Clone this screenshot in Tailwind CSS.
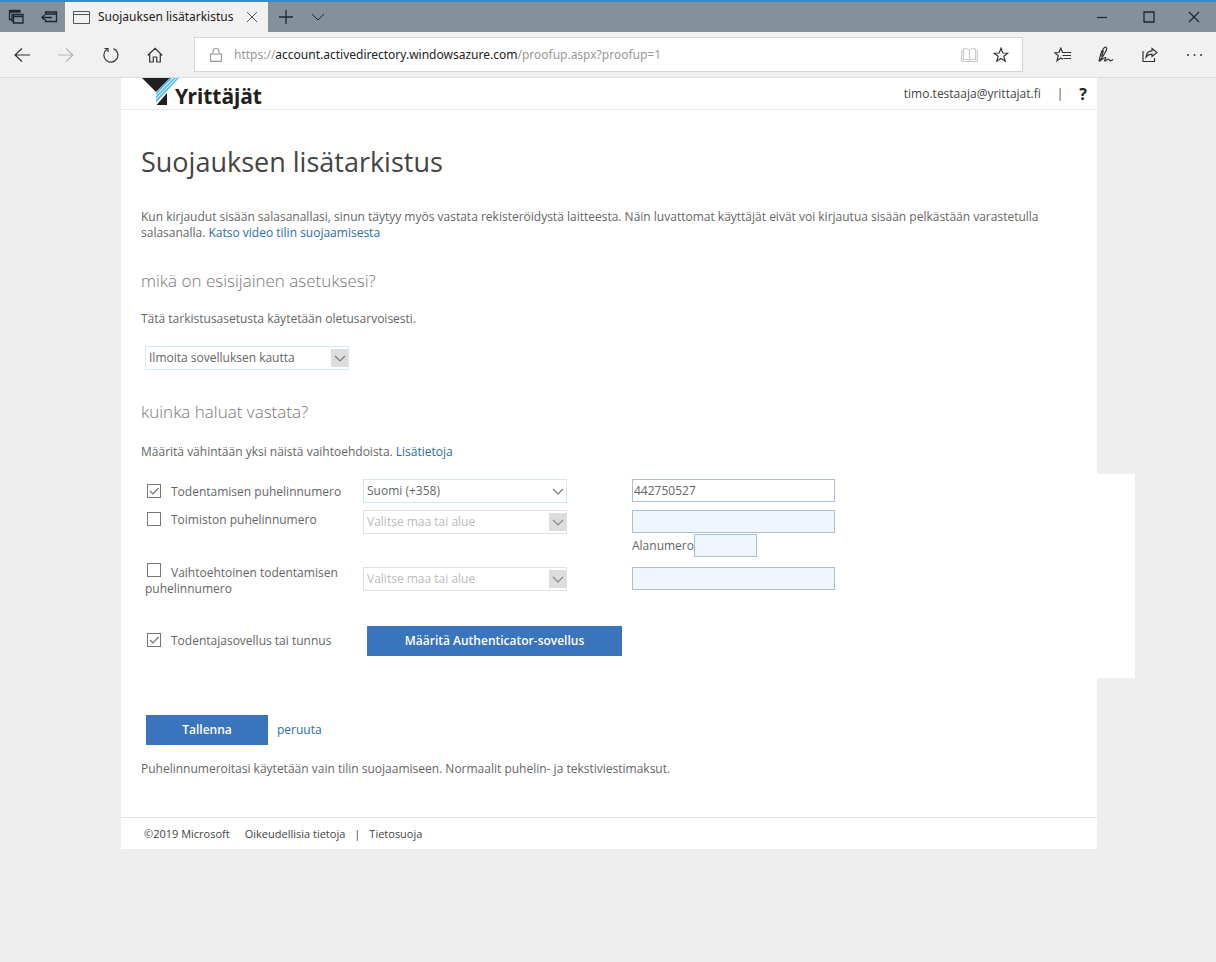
<!DOCTYPE html>
<html lang="fi">
<head>
    <meta charset="UTF-8">
    <meta name="viewport" content="width=device-width, initial-scale=1.0">
    <title>Suojauksen lisätarkistus</title>
    <script src="https://cdn.jsdelivr.net/npm/@tailwindcss/browser@4"></script>
</head>
<body class="min-h-screen bg-[#eeeeee] font-['Open_Sans',sans-serif] text-[12px] leading-4 text-[#666666]">
    <!-- Tab bar -->
    <header class="font-['Noto_Sans',sans-serif]">
        <div class="flex h-8 items-stretch border-t-2 border-[#3c8ac4] bg-[#84909c] text-[#1c2733]">
            <button aria-label="Välilehdet" class="flex w-8 items-center justify-center">
                <svg class="size-4" viewBox="0 0 16 16" fill="none" stroke="currentColor" stroke-width="1.3"><path d="M3.500 10.500H1.500V1.500h10.500v2M1.500 3h10.500M6 12H4V4.500M5.500 5.500h9.500v8.500H5.500zM5.500 7.500h9.500" /></svg>
            </button>
            <button aria-label="Siirrä välilehdet sivuun" class="flex w-[33px] items-center justify-center">
                <svg class="h-4 w-[18px]" viewBox="0 0 18 16" fill="none" stroke="currentColor" stroke-width="1.3"><path d="M5.500 6V3h11v9.500h-11v-2M5.500 5h11M12 8.500H2M4.500 6L2 8.500 4.500 11" /></svg>
            </button>
            <div class="flex w-[203px] items-center bg-[#f1f1f1] pl-2 text-[#222222]">
                <svg class="h-[15px] w-[17px]" viewBox="0 0 17 15" fill="none" stroke="#555" stroke-width="1"><path d="M.5 1.500h16v12H.5zM.5 4.500h16" /></svg>
                <span class="ml-2 whitespace-nowrap">Suojauksen lisätarkistus</span>
                <button aria-label="Sulje välilehti" class="mr-[10px] ml-auto">
                    <svg class="size-3" viewBox="0 0 12 12" fill="none" stroke="#555"><path d="M1 1l10 10M11 1L1 11" /></svg>
                </button>
            </div>
            <button aria-label="Uusi välilehti" class="flex w-9 items-center justify-center">
                <svg class="size-[14px]" viewBox="0 0 14 14" fill="none" stroke="currentColor" stroke-width="1.3"><path d="M7 0v14M0 7h14" /></svg>
            </button>
            <button aria-label="Esikatselut" class="flex w-7 items-center justify-center">
                <svg class="h-2 w-[14px]" viewBox="0 0 14 8" fill="none" stroke="currentColor"><path d="M1 1l6 6 6-6" /></svg>
            </button>
            <div class="ml-auto flex">
                <button aria-label="Pienennä" class="flex w-[47px] items-center justify-center">
                    <svg class="size-3" viewBox="0 0 12 12" fill="none" stroke="currentColor" stroke-width="1.2"><path d="M1 6.500h10" /></svg>
                </button>
                <button aria-label="Suurenna" class="flex w-[47px] items-center justify-center">
                    <svg class="size-3" viewBox="0 0 12 12" fill="none" stroke="currentColor" stroke-width="1.3"><path d="M1 1h10v10H1z" /></svg>
                </button>
                <button aria-label="Sulje" class="flex w-[44px] items-center justify-center">
                    <svg class="size-3" viewBox="0 0 12 12" fill="none" stroke="currentColor" stroke-width="1.2"><path d="M1 1l10 10M11 1L1 11" /></svg>
                </button>
            </div>
        </div>

        <!-- Toolbar -->
        <div class="flex h-[46px] items-center border-b border-[#dddddd] bg-[#f1f1f1] text-[#333333]">
            <button aria-label="Takaisin" class="flex w-11 justify-center">
                <svg class="size-4" viewBox="0 0 16 16" fill="none" stroke="currentColor" stroke-width="1.2"><path d="M16 8H1M8 1.500L1 8l7 6.500" /></svg>
            </button>
            <button aria-label="Eteenpäin" class="flex w-11 justify-center text-[#b5b5b5]">
                <svg class="size-4" viewBox="0 0 16 16" fill="none" stroke="currentColor" stroke-width="1.2"><path d="M0 8h15M8 1.500L15 8l-7 6.500" /></svg>
            </button>
            <button aria-label="Päivitä" class="flex w-[45px] justify-center">
                <svg class="size-4" viewBox="0 0 16 16" fill="none" stroke="currentColor" stroke-width="1.2"><path d="M10.500 1.600A7 7 0 1 1 4 2.300M1.500 1.500h3.500V5" /></svg>
            </button>
            <button aria-label="Aloitussivu" class="flex w-11 justify-center">
                <svg class="size-4" viewBox="0 0 16 16" fill="none" stroke="currentColor" stroke-width="1.2"><path d="M.7 8.500L8 1.300l7.300 7.200M2.700 7v8h3.600v-5h3.400v5h3.600V7" /></svg>
            </button>
            <div class="ml-[17px] flex h-[35px] flex-1 items-center border border-[#d4d4d4] bg-white">
                <svg class="ml-[15px] h-4 w-3" viewBox="0 0 12 16" fill="none" stroke="#999" stroke-width="1.1"><path d="M.6 7h10.800v7.400H.6zM3 7V4.500a3 3 0 0 1 6 0V7" /></svg>
                <div role="textbox" aria-label="Osoite" contenteditable="true" class="ml-3 flex-1 whitespace-nowrap text-[#999999] outline-none">https://<span class="text-[#222222]">account.activedirectory.windowsazure.com</span>/proofup.aspx?proofup=1</div>
                <button aria-label="Lukunäkymä" class="flex w-8 justify-center">
                    <svg class="h-4 w-[17px]" viewBox="0 0 17 16" fill="none" stroke="#c8c8c8" stroke-width="1.1"><path d="M8.500 3v10.500M8.500 3C7.500 1.500 4 1.500 2.500 2v10.500c2-.4 5-.3 6 1 1-1.300 4-1.400 6-1V2c-1.500-.5-5-.5-6 1M2.500 4H.7v10.500h15.600V4h-1.800" /></svg>
                </button>
                <button aria-label="Lisää suosikkeihin" class="mr-[5px] flex w-8 justify-center">
                    <svg class="size-4" viewBox="0 0 16 16" fill="none" stroke="currentColor" stroke-width="1.200"><path d="M8 1.200l1.800 4.800 5 .2-4 3.100 1.400 4.900L8 11.400l-4.200 2.800 1.400-4.900-4-3.100 5-.2z" /></svg>
                </button>
            </div>
            <button aria-label="Suosikit" class="ml-[17px] flex w-11 justify-center">
                <svg class="h-4 w-[17px]" viewBox="0 0 17 16" fill="none" stroke="currentColor" stroke-width="1.200"><path d="M10.500 5.500H8.600L6.800 1.200 5 5.500.8 5.800l3.400 2.800-1.200 5 3.800-2.700 2 1.400M9.500 5.500H17M8.500 8.500H17M9.500 11.500H17" /></svg>
            </button>
            <button aria-label="Muistiinpanot" class="flex w-11 justify-center">
                <svg class="h-[17px] w-4" viewBox="0 0 16 17" fill="none" stroke="currentColor" stroke-width="1.200"><path d="M1 15.500l1-4.500C3 7 4.500 3 6.500 1.500c1.500-.8 2.800.3 2 2.200C7.500 6.500 5 10 3 13zM3.500 10.500l2-6M1 15.500C4 13.500 6.500 11 7.500 11.500s-2 3.500-.5 3.500 2-2 3.200-2 .8 1.800 2.200 1.800 1.600-1.300 2.800-1.100" /></svg>
            </button>
            <button aria-label="Jaa" class="flex w-11 justify-center">
                <svg class="size-4" viewBox="0 0 16 16" fill="none" stroke="currentColor" stroke-width="1.200"><path d="M1 4v10.500h11.500V11M10 1.500l5 4-5 4V7.200c-3 0-4.500 1-6 3 .3-4 2.500-6.200 6-6.400z" /></svg>
            </button>
            <button aria-label="Lisää" class="flex w-11 justify-center">
                <svg class="h-4 w-[17px]" viewBox="0 0 17 16" fill="currentColor"><circle cx="2" cy="8" r="1" /><circle cx="8.500" cy="8" r="1" /><circle cx="15" cy="8" r="1" /></svg>
            </button>
        </div>
    </header>

    <!-- Page -->
    <div class="pl-0.5">
    <div class="mx-auto max-w-[976px] bg-white">
        <div class="flex h-8 items-start border-b border-[#eaeaea] pr-[10px] pl-[21px]">
            <svg class="h-[27px] w-[38px]" viewBox="0 0 38 27" role="img" aria-label="Yrittäjät-logo">
                <path d="M0 0h28L14 14z" fill="#231f20" />
                <path d="M25 15v12H14.500z" fill="#231f20" />
                <path d="M14 14.500L28 0h9L14 24.500z" fill="#54bfee" />
                <path d="M13.500 18L31 0M13.500 21.500L34.500 0" stroke="#fff" stroke-width="1" />
            </svg>
            <span class="-ml-[5px] font-['Noto_Sans',sans-serif] text-[21px] leading-9 font-bold text-[#231f20]">Yrittäjät</span>
            <div class="ml-auto flex h-[31px] items-center text-[#444444]">
                <span>timo.testaaja@yrittajat.fi</span>
                <span class="ml-4">|</span>
                <a href="#" class="ml-4 text-[16px] font-bold text-[#222222]">?</a>
            </div>
        </div>

        <main class="px-5 pt-8 pb-10">
            <h1 class="text-[27px] leading-10 text-[#444444]">Suojauksen lisätarkistus</h1>
            <p class="mt-[27px] max-w-[900px]">Kun kirjaudut sisään salasanallasi, sinun täytyy myös vastata rekisteröidystä laitteesta. Näin luvattomat käyttäjät eivät voi kirjautua sisään pelkästään varastetulla salasanalla. <a href="#" class="text-[#2a6da8]">Katso video tilin suojaamisesta</a></p>

            <h2 class="mt-[26px] text-[17px] leading-7 font-light text-[#777777]">mikä on esisijainen asetuksesi?</h2>
            <p class="mt-4">Tätä tarkistusasetusta käytetään oletusarvoisesti.</p>
            <div class="relative mt-[19px] ml-1 w-[204px]">
                <select aria-label="Ensisijainen asetus" class="block h-6 w-full appearance-none border border-[#d3e8f5] bg-white px-[3px]">
                    <option>Ilmoita sovelluksen kautta</option>
                </select>
                <span class="pointer-events-none absolute top-[3px] right-px flex h-[18px] w-[17px] items-center justify-center bg-[#dddddd]">
                    <svg class="h-[7px] w-3" viewBox="0 0 12 7" fill="none" stroke="#777" stroke-width="1.200"><path d="M1 1l5 5 5-5" /></svg>
                </span>
            </div>

            <h2 class="mt-7 text-[17px] leading-7 font-light text-[#777777]">kuinka haluat vastata?</h2>
            <p class="mt-[18px]">Määritä vähintään yksi näistä vaihtoehdoista. <a href="#" class="text-[#2a6da8]">Lisätietoja</a></p>

            <form id="options">
                <div class="mt-[14px] -mr-[58px] grid grid-cols-[222px_269px_1fr] grid-rows-[31px_57px_59px_30px] items-start bg-white pt-[5px] pb-[22px]">
                    <label class="flex items-start gap-[10px] pt-[5px] pl-[6px]">
                        <span class="grid size-[14px]">
                            <input type="checkbox" checked class="peer col-start-1 row-start-1 size-[14px] appearance-none border border-[#777777] bg-white">
                            <svg class="pointer-events-none invisible col-start-1 row-start-1 size-[14px] peer-checked:visible" viewBox="0 0 14 14" fill="none" stroke="#777" stroke-width="1.200"><path d="M3 7l3 3 5.500-6" /></svg>
                        </span>
                        Todentamisen puhelinnumero
                    </label>
                    <div class="relative w-[204px]">
                        <select aria-label="Maa tai alue" class="block h-6 w-full appearance-none border border-[#d3e8f5] bg-white px-[3px]">
                            <option>Suomi (+358)</option>
                        </select>
                        <span class="pointer-events-none absolute top-[3px] right-px flex h-[18px] w-[17px] items-center justify-center">
                            <svg class="h-[7px] w-3" viewBox="0 0 12 7" fill="none" stroke="#777" stroke-width="1.200"><path d="M1 1l5 5 5-5" /></svg>
                        </span>
                    </div>
                    <input type="tel" aria-label="Todentamisen puhelinnumero" value="442750527" class="h-[23px] w-[203px] border border-[#a9bfd2] bg-white px-px">

                    <label class="flex items-start gap-[10px] pt-[2px] pl-[6px]">
                        <span class="grid size-[14px]">
                            <input type="checkbox" class="peer col-start-1 row-start-1 size-[14px] appearance-none border border-[#777777] bg-white">
                            <svg class="pointer-events-none invisible col-start-1 row-start-1 size-[14px] peer-checked:visible" viewBox="0 0 14 14" fill="none" stroke="#777" stroke-width="1.200"><path d="M3 7l3 3 5.500-6" /></svg>
                        </span>
                        Toimiston puhelinnumero
                    </label>
                    <div class="relative w-[204px]">
                        <select aria-label="Toimiston maa tai alue" disabled class="block h-6 w-full appearance-none border border-[#e2e2e2] bg-white px-[3px] text-[#bbbbbb] opacity-100">
                            <option>Valitse maa tai alue</option>
                        </select>
                        <span class="pointer-events-none absolute top-[3px] right-px flex h-[18px] w-[17px] items-center justify-center bg-[#dddddd]">
                            <svg class="h-[7px] w-3" viewBox="0 0 12 7" fill="none" stroke="#888" stroke-width="1.200"><path d="M1 1l5 5 5-5" /></svg>
                        </span>
                    </div>
                    <div>
                        <input type="tel" aria-label="Toimiston puhelinnumero" disabled class="block h-[23px] w-[203px] border border-[#a9bfd2] bg-[#f0f6fd] px-px">
                        <div class="mt-px flex items-center">
                            <label for="extension">Alanumero</label>
                            <input id="extension" type="text" disabled class="h-[23px] w-[63px] border border-[#a9bfd2] bg-[#f0f6fd] px-px">
                        </div>
                    </div>

                    <label class="-mt-1 pl-1">
                        <span class="mr-[10px] ml-[2px] inline-grid size-[14px] align-baseline">
                            <input type="checkbox" class="peer col-start-1 row-start-1 size-[14px] appearance-none border border-[#777777] bg-white">
                            <svg class="pointer-events-none invisible col-start-1 row-start-1 size-[14px] peer-checked:visible" viewBox="0 0 14 14" fill="none" stroke="#777" stroke-width="1.200"><path d="M3 7l3 3 5.500-6" /></svg>
                        </span>Vaihtoehtoinen todentamisen puhelinnumero
                    </label>
                    <div class="relative w-[204px]">
                        <select aria-label="Vaihtoehtoinen maa tai alue" disabled class="block h-6 w-full appearance-none border border-[#e2e2e2] bg-white px-[3px] text-[#bbbbbb] opacity-100">
                            <option>Valitse maa tai alue</option>
                        </select>
                        <span class="pointer-events-none absolute top-[3px] right-px flex h-[18px] w-[17px] items-center justify-center bg-[#dddddd]">
                            <svg class="h-[7px] w-3" viewBox="0 0 12 7" fill="none" stroke="#888" stroke-width="1.200"><path d="M1 1l5 5 5-5" /></svg>
                        </span>
                    </div>
                    <input type="tel" aria-label="Vaihtoehtoinen puhelinnumero" disabled class="h-[23px] w-[203px] border border-[#a9bfd2] bg-[#f0f6fd] px-px">

                    <label class="flex items-start gap-[10px] self-center pl-[6px]">
                        <span class="grid size-[14px]">
                            <input type="checkbox" checked class="peer col-start-1 row-start-1 size-[14px] appearance-none border border-[#777777] bg-white">
                            <svg class="pointer-events-none invisible col-start-1 row-start-1 size-[14px] peer-checked:visible" viewBox="0 0 14 14" fill="none" stroke="#777" stroke-width="1.200"><path d="M3 7l3 3 5.500-6" /></svg>
                        </span>
                        Todentajasovellus tai tunnus
                    </label>
                    <button type="button" class="ml-1 h-[30px] w-[255px] bg-[#3a74bd] font-semibold text-white">Määritä Authenticator-sovellus</button>
                </div>

                <div class="mt-[37px] ml-[5px] flex items-center gap-[9px]">
                    <button type="submit" class="h-[30px] w-[122px] bg-[#3a74bd] font-semibold text-white">Tallenna</button>
                    <a href="#" class="text-[#2a6da8]">peruuta</a>
                </div>
            </form>
            <p class="mt-4">Puhelinnumeroitasi käytetään vain tilin suojaamiseen. Normaalit puhelin- ja tekstiviestimaksut.</p>
        </main>

        <footer class="flex h-8 items-center border-t border-[#e4e4e4] pl-[23px] text-[11px] text-[#444444]">
            <span>©2019 Microsoft</span>
            <a href="#" class="ml-[15px]">Oikeudellisia tietoja</a>
            <span class="mx-[9px]">|</span>
            <a href="#">Tietosuoja</a>
        </footer>
    </div>
    </div>

    <script>
        document.getElementById('options').addEventListener('submit', (e) => e.preventDefault());
    </script>
</body>
</html>
